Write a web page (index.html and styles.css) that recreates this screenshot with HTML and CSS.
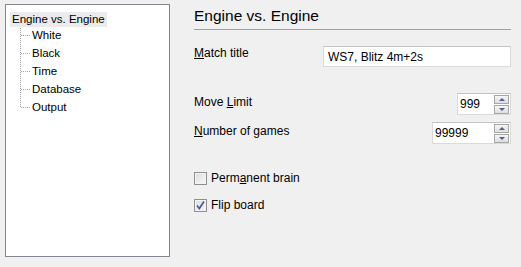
FILE: index.html
```html
<!DOCTYPE html>
<html lang="en">
<head>
    <meta charset="UTF-8">
    <title>Engine vs. Engine</title>
    <link rel="stylesheet" href="styles.css">
</head>
<body>
    <div class="dialog">
        <div class="tree">
            <div class="tree-root">Engine vs. Engine</div>
            <ul class="tree-children">
                <li>White</li>
                <li>Black</li>
                <li>Time</li>
                <li>Database</li>
                <li>Output</li>
            </ul>
        </div>

        <div class="page">
            <h1 class="page-title">Engine vs. Engine</h1>

            <div class="field field-title">
                <label for="matchTitle"><u>M</u>atch title</label>
                <input id="matchTitle" class="text-input" type="text" value="WS7, Blitz 4m+2s">
            </div>

            <div class="field field-limit">
                <label for="moveLimit">Move <u>L</u>imit</label>
                <div class="spin spin-limit">
                    <input id="moveLimit" type="text" value="999">
                    <div class="spin-buttons">
                        <button class="spin-up"></button>
                        <button class="spin-down"></button>
                    </div>
                </div>
            </div>

            <div class="field field-games">
                <label for="games"><u>N</u>umber of games</label>
                <div class="spin spin-games">
                    <input id="games" type="text" value="99999">
                    <div class="spin-buttons">
                        <button class="spin-up"></button>
                        <button class="spin-down"></button>
                    </div>
                </div>
            </div>

            <div class="checks">
                <label class="check">
                    <span class="check-box"></span>
                    <span>Perm<u>a</u>nent brain</span>
                </label>
                <label class="check">
                    <span class="check-box">
                        <svg width="11" height="11" viewBox="0 0 11 11">
                            <path d="M2 5.5 L4.3 8.5 L9 1.5" fill="none" stroke="#4a5d98" stroke-width="1.7"/>
                        </svg>
                    </span>
                    <span>Flip board</span>
                </label>
            </div>
        </div>
    </div>
</body>
</html>
```

FILE: styles.css
```css
* {
    box-sizing: border-box;
}

body {
    margin: 0;
    background-color: #f0f0f0;
    font-family: 'Liberation Sans', Arial, sans-serif;
    font-size: 12px;
    color: #000;
}

.dialog {
    display: flex;
    align-items: flex-start;
    padding: 4px 0 0 5px;
}

/* Left tree */
.tree {
    width: 165px;
    height: 253px;
    border: 1px solid #828790;
    background-color: #fff;
    padding: 7px 0 0 4px;
    font-size: 11.5px;
}

.tree-root {
    display: inline-block;
    height: 15px;
    line-height: 15px;
    padding: 0 2px;
    background-color: #ebebeb;
}

.tree-children {
    list-style: none;
    margin: -1px 0 0 10px;
    padding: 0;
}

.tree-children li {
    height: 18px;
    line-height: 18px;
    padding-left: 12px;
    background:
        repeating-linear-gradient(to right, #a0a0a0 0 1px, transparent 1px 2px) 1px 9px / 9px 1px no-repeat,
        repeating-linear-gradient(to bottom, #a0a0a0 0 1px, transparent 1px 2px) 0 0 / 1px 100% no-repeat;
}

.tree-children li:last-child {
    background:
        repeating-linear-gradient(to right, #a0a0a0 0 1px, transparent 1px 2px) 1px 9px / 9px 1px no-repeat,
        linear-gradient(#fff, #fff) 0 10px / 1px 8px no-repeat,
        repeating-linear-gradient(to bottom, #a0a0a0 0 1px, transparent 1px 2px) 0 0 / 1px 100% no-repeat;
}

/* Right page */
.page {
    width: 317px;
    margin-left: 24px;
    padding-top: 3px;
}

.page-title {
    margin: 0;
    font-size: 15.5px;
    font-weight: normal;
    line-height: 18px;
    padding-bottom: 4px;
    border-bottom: 1px solid #a0a0a0;
}

.field {
    display: flex;
    justify-content: space-between;
    align-items: flex-start;
}

.field label {
    line-height: 14px;
}

.field-title {
    margin-top: 16px;
}

.field-limit {
    margin-top: 26px;
}

.field-games {
    margin-top: 7px;
}

.field-limit label,
.field-games label {
    margin-top: 2px;
}

.text-input {
    width: 188px;
    height: 21px;
    border: 1px solid #dadada;
    border-top-color: #c4c4c4;
    padding: 0 4px;
    font: inherit;
    background-color: #fff;
    outline: none;
}

.spin {
    display: flex;
    align-items: center;
    height: 22px;
    border: 1px solid #dadada;
    border-top-color: #c4c4c4;
    background-color: #fff;
    padding-right: 1px;
}

.spin-limit {
    width: 54px;
}

.spin-games {
    width: 79px;
}

.spin input {
    flex: 1;
    width: 0;
    min-width: 0;
    border: none;
    padding: 0 0 0 2px;
    font: inherit;
    background: transparent;
    outline: none;
}

.spin-buttons {
    display: flex;
    flex-direction: column;
    gap: 1px;
}

.spin-buttons button {
    display: flex;
    align-items: center;
    justify-content: center;
    width: 15px;
    height: 9px;
    padding: 0;
    border: 1px solid #a7a7a7;
    background: linear-gradient(#f6f6f6, #dedede);
}

.spin-up::after,
.spin-down::after {
    content: '';
    border-left: 3px solid transparent;
    border-right: 3px solid transparent;
}

.spin-up::after {
    border-bottom: 3px solid #4d6089;
}

.spin-down::after {
    border-top: 3px solid #4d6089;
}

/* Checkboxes */
.checks {
    margin-top: 26px;
    display: flex;
    flex-direction: column;
    gap: 11px;
}

.check {
    display: flex;
    align-items: center;
    height: 16px;
    gap: 4px;
}

.check-box {
    display: flex;
    align-items: center;
    justify-content: center;
    width: 13px;
    height: 13px;
    border: 1px solid #8f8f8f;
    background: linear-gradient(135deg, #dcdcdc, #f8f8f8);
    box-shadow: inset 0 0 0 1px #f4f4f4;
}
```
